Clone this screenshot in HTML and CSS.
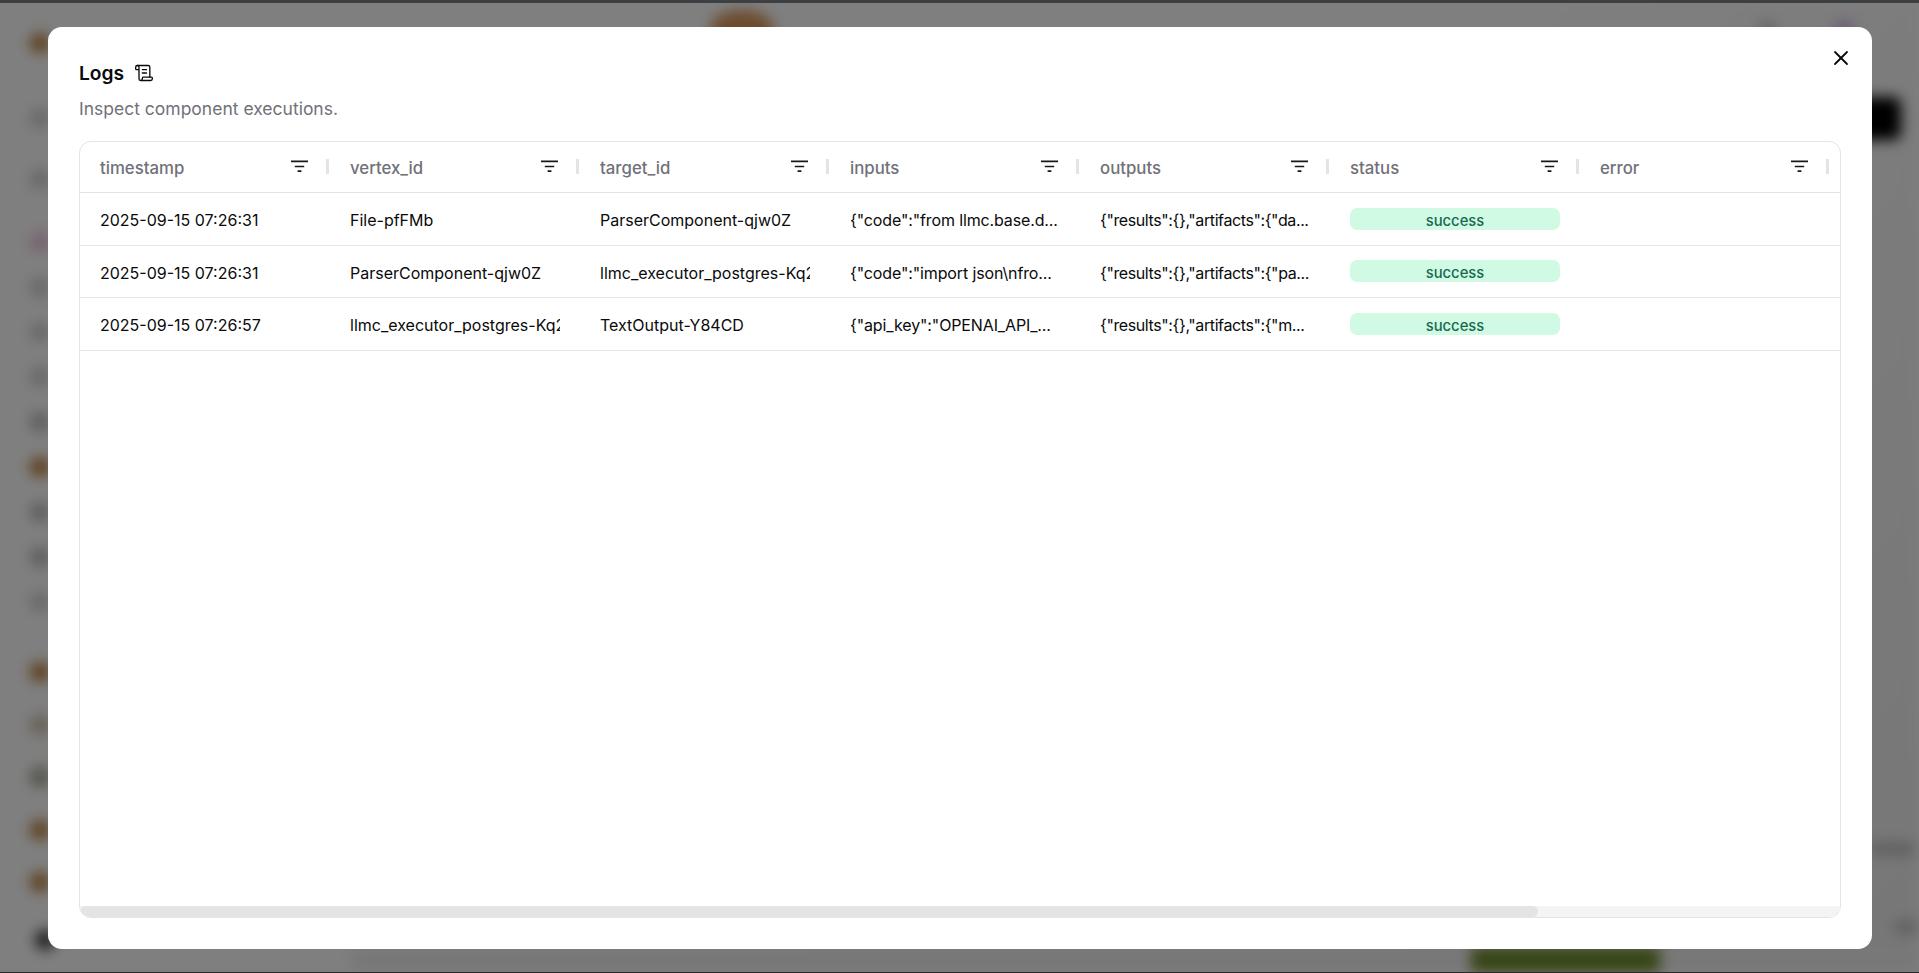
FILE: index.html
```html
<!DOCTYPE html>
<html lang="en">
<head>
<meta charset="utf-8">
<title>Logs</title>
<link rel="stylesheet" href="styles.css">
</head>
<body>
<div class="app">
  <aside class="sidebar">
    <div class="dot tan first"></div>
    <div class="nav-top">
      <div class="dot grey"></div>
      <div class="dot grey"></div>
    </div>
    <div class="nav-mid">
      <div class="dot pink"></div>
      <div class="dot grey"></div>
      <div class="dot grey"></div>
      <div class="dot grey"></div>
      <div class="dot dark"></div>
      <div class="dot tan"></div>
      <div class="dot dark"></div>
      <div class="dot dark"></div>
      <div class="dot grey"></div>
    </div>
    <div class="nav-low">
      <div class="dot tan"></div>
      <div class="dot sand"></div>
      <div class="dot olive"></div>
      <div class="dot tan"></div>
      <div class="dot tan"></div>
    </div>
    <div class="dot black last"></div>
  </aside>
  <main class="workspace">
    <header class="topbar">
      <div class="logo"></div>
      <div class="account">
        <div class="dot grey"></div>
        <div class="dot violet"></div>
      </div>
    </header>
    <div class="toolbar"><div class="run"></div></div>
    <div class="canvas"></div>
    <div class="side-notes">
      <div class="note"></div>
      <div class="note short"></div>
    </div>
    <footer class="footer"><div class="green"></div></footer>
  </main>
</div>
<div class="browser-top"></div>
<div class="browser-bottom"></div>

<div class="overlay">
  <section class="modal">
    <button class="close" aria-label="Close">
      <svg class="close-icon" viewBox="0 0 24 24" fill="none" stroke="currentColor" stroke-width="1.8" stroke-linecap="round" stroke-linejoin="round"><path d="M18 6 6 18"/><path d="m6 6 12 12"/></svg>
    </button>
    <h2 class="title">Logs
      <svg class="title-icon" viewBox="0 0 24 24" fill="none" stroke="currentColor" stroke-width="1.6" stroke-linecap="round" stroke-linejoin="round"><path d="M15 12h-5"/><path d="M15 8h-5"/><path d="M19 17V5a2 2 0 0 0-2-2H4"/><path d="M8 21h12a2 2 0 0 0 2-2v-1a1 1 0 0 0-1-1H11a1 1 0 0 0-1 1v1a2 2 0 1 1-4 0V5a2 2 0 1 0-4 0v2a1 1 0 0 0 1 1h3"/></svg>
    </h2>
    <p class="desc">Inspect component executions.</p>
    <div class="table">
      <div class="viewport">
        <div class="row head">
          <div class="hcell"><span>timestamp</span><svg class="filter" viewBox="0 0 18 13"><path d="M0 1h18M4 6.5h10M7 11.5h4"/></svg><i class="sep"></i></div>
          <div class="hcell"><span>vertex_id</span><svg class="filter" viewBox="0 0 18 13"><path d="M0 1h18M4 6.5h10M7 11.5h4"/></svg><i class="sep"></i></div>
          <div class="hcell"><span>target_id</span><svg class="filter" viewBox="0 0 18 13"><path d="M0 1h18M4 6.5h10M7 11.5h4"/></svg><i class="sep"></i></div>
          <div class="hcell"><span>inputs</span><svg class="filter" viewBox="0 0 18 13"><path d="M0 1h18M4 6.5h10M7 11.5h4"/></svg><i class="sep"></i></div>
          <div class="hcell"><span>outputs</span><svg class="filter" viewBox="0 0 18 13"><path d="M0 1h18M4 6.5h10M7 11.5h4"/></svg><i class="sep"></i></div>
          <div class="hcell"><span>status</span><svg class="filter" viewBox="0 0 18 13"><path d="M0 1h18M4 6.5h10M7 11.5h4"/></svg><i class="sep"></i></div>
          <div class="hcell"><span>error</span><svg class="filter" viewBox="0 0 18 13"><path d="M0 1h18M4 6.5h10M7 11.5h4"/></svg><i class="sep"></i></div>
        </div>
        <div class="row body">
          <div class="cell">2025-09-15 07:26:31</div>
          <div class="cell id">File-pfFMb</div>
          <div class="cell id">ParserComponent-qjw0Z</div>
          <div class="cell json-in">{"code":"from llmc.base.d...</div>
          <div class="cell json-out">{"results":{},"artifacts":{"da...</div>
          <div class="cell"><span class="badge">success</span></div>
          <div class="cell"></div>
        </div>
        <div class="row body">
          <div class="cell">2025-09-15 07:26:31</div>
          <div class="cell id">ParserComponent-qjw0Z</div>
          <div class="cell id">llmc_executor_postgres-Kq2Xz</div>
          <div class="cell json-in">{"code":"import json\nfro...</div>
          <div class="cell json-out">{"results":{},"artifacts":{"pa...</div>
          <div class="cell"><span class="badge">success</span></div>
          <div class="cell"></div>
        </div>
        <div class="row body">
          <div class="cell">2025-09-15 07:26:57</div>
          <div class="cell id">llmc_executor_postgres-Kq2Xz</div>
          <div class="cell id">TextOutput-Y84CD</div>
          <div class="cell json-in">{"api_key":"OPENAI_API_...</div>
          <div class="cell json-out">{"results":{},"artifacts":{"m...</div>
          <div class="cell"><span class="badge">success</span></div>
          <div class="cell"></div>
        </div>
      </div>
      <div class="scrollbar"><div class="thumb"></div></div>
    </div>
  </section>
</div>
</body>
</html>
```
FILE: styles.css
```css
* { box-sizing: border-box; }
html, body { margin: 0; height: 100%; overflow: hidden; }
body { font-family: Inter, "Noto Sans", sans-serif; background: #fff; }

/* blurred app behind the dialog */
.app {
  height: 973px;
  display: flex;
  filter: blur(7px);
  background: linear-gradient(135deg, #ffffff 0%, #ffffff 50%, #eeeeee 100%);
}
.sidebar {
  width: 70px;
  flex: none;
  padding: 33px 0 0 30px;
  display: flex;
  flex-direction: column;
}
.dot { width: 20px; height: 20px; border-radius: 50%; flex: none; }
.grey { background: #cecece; }
.dark { background: #b8b8b8; }
.tan { background: #b8772f; }
.sand { background: #cbbfa8; }
.olive { background: #9da28c; }
.pink { background: #ecc0dc; }
.violet { background: #d8b4f0; }
.black { background: #303030; }
.nav-top { display: flex; flex-direction: column; gap: 41px; margin-top: 55px; }
.nav-mid { display: flex; flex-direction: column; gap: 25px; margin-top: 43px; }
.nav-low { display: flex; flex-direction: column; gap: 32.5px; margin-top: 50px; }
.last { margin-top: 38px; margin-left: 5px; }

.workspace { flex: 1; display: flex; flex-direction: column; min-width: 0; }
.topbar { height: 97px; flex: none; display: flex; justify-content: space-between; padding-right: 65px; }
.logo { width: 64px; height: 40px; margin: 10px 0 0 640px; border-radius: 50%; background: #d8965a; }
.account { display: flex; gap: 57px; padding-top: 20px; }
.toolbar { display: flex; justify-content: flex-end; padding-right: 18px; flex: none; }
.run { width: 90px; height: 43px; border-radius: 8px; background: #000; }
.canvas { flex: 1; }
.side-notes { flex: none; display: flex; flex-direction: column; align-items: flex-end; gap: 66px; padding-bottom: 14px; }
.note { width: 46px; height: 12px; margin-right: 4px; background: #bdbdbd; }
.note.short { width: 24px; margin-right: 0; }
.footer { height: 26px; flex: none; margin-left: 280px; padding-left: 1121px; background: #f0f0f0; }
.green { width: 189px; height: 100%; background: #6f8a2c; }

.browser-top { position: fixed; left: 0; right: 0; top: 0; height: 3px; background: #3c4043; z-index: 2; }
.browser-bottom { position: fixed; left: 0; right: 0; bottom: 0; height: 1px; background: #2a2a2a; z-index: 2; }

/* dialog */
.overlay {
  position: fixed;
  inset: 0;
  background: rgba(0, 0, 0, .5);
  padding: 27px 47px 24px 48px;
  display: flex;
}
.modal {
  position: relative;
  flex: 1;
  min-width: 0;
  background: #fff;
  border-radius: 14px;
  padding: 31px 31px 31px 31px;
  display: flex;
  flex-direction: column;
}
.close {
  position: absolute;
  top: 19px;
  right: 19px;
  width: 24px;
  height: 24px;
  padding: 0;
  border: 0;
  background: none;
  color: #0a0a0a;
}
.close-icon { width: 24px; height: 24px; display: block; }
.title {
  margin: 0;
  height: 30px;
  display: flex;
  align-items: center;
  gap: 10px;
  font-size: 19.2px;
  line-height: 30px;
  font-weight: 600;
  color: #0a0a0a;
}
.title-icon { width: 20px; height: 20px; }
.desc {
  margin: 8px 0 0;
  height: 26px;
  font-size: 17.5px;
  line-height: 26px;
  color: #71717a;
}
.table {
  margin-top: 19px;
  flex: 1;
  min-height: 0;
  display: flex;
  flex-direction: column;
  border: 1px solid #e4e4e7;
  border-radius: 12px;
  overflow: hidden;
}
.viewport { flex: 1; min-height: 0; overflow: hidden; }
.row { display: grid; grid-template-columns: repeat(7, 250px); }
.head { height: 51px; border-bottom: 1px solid #e4e4e7; }
.body { height: 52.67px; border-bottom: 1px solid #e8e8eb; }
.hcell {
  position: relative;
  display: flex;
  align-items: center;
  justify-content: space-between;
  padding: 2px 22px 0 20px;
  font-size: 16.8px;
  font-weight: 500;
  color: #71717a;
}
.filter { width: 17px; height: 13px; margin-top: -3px; stroke: #18181b; stroke-width: 1.8; fill: none; }
.sep { position: absolute; right: 1px; top: 17px; width: 3px; height: 15px; background: #e4e4e7; }
.cell {
  margin: 0 20px;
  padding-top: 2.6px;
  min-width: 0;
  display: flex;
  align-items: center;
  font-size: 16px;
  color: #0a0a0a;
  white-space: nowrap;
  overflow: hidden;
}
.json-in { letter-spacing: -.13px; }
.json-out { letter-spacing: -.4px; }
.badge {
  width: 210px;
  height: 22px;
  line-height: 26px;
  border-radius: 7px;
  background: #d1fae5;
  color: #166a50;
  font-size: 14.8px;
  font-weight: 500;
  text-align: center;
  margin-top: -3px;
}
.scrollbar { height: 11px; flex: none; background: #f4f4f5; }
.thumb { width: 1458px; height: 100%; background: #e4e4e7; border-radius: 6px; }
```
